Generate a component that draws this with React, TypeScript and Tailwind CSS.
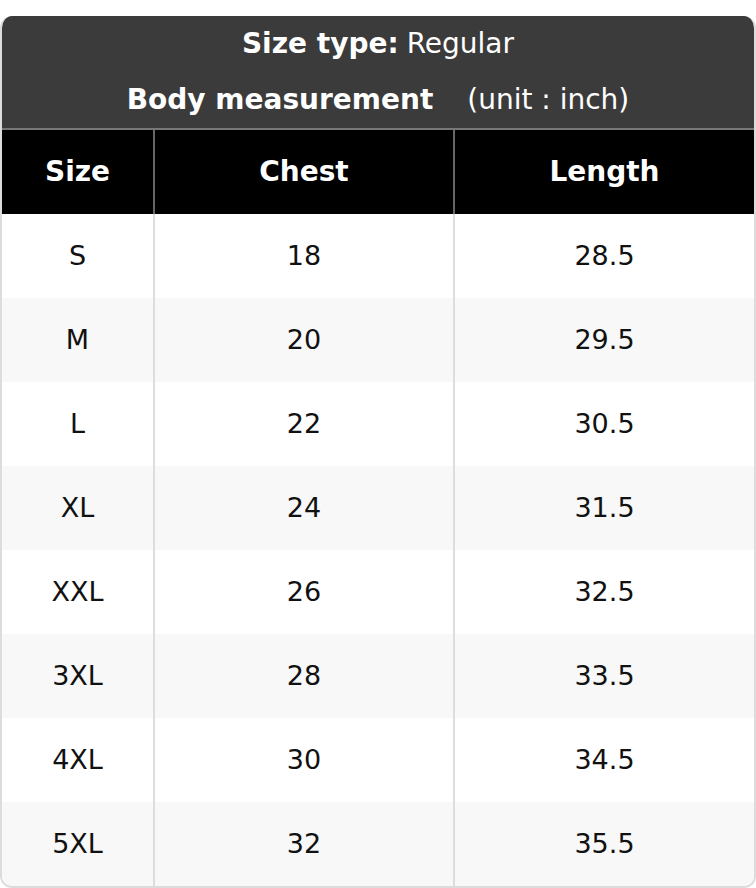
const rows = [
  ["S", "18", "28.5"],
  ["M", "20", "29.5"],
  ["L", "22", "30.5"],
  ["XL", "24", "31.5"],
  ["XXL", "26", "32.5"],
  ["3XL", "28", "33.5"],
  ["4XL", "30", "34.5"],
  ["5XL", "32", "35.5"],
];

const App = () => {
  return (
    <div className="bg-white pt-4" style={{ fontFamily: '"DejaVu Sans", Verdana, sans-serif' }}>
      <div className="w-[756px] overflow-hidden rounded-xl border-2 border-[#dcdcdc] border-t-0">
        <div className="bg-[#3b3b3b] text-[28px] text-white">
          <div className="flex h-14 items-center justify-center">
            <span className="font-bold">Size type:</span>
            <span className="ml-2">Regular</span>
          </div>
          <div className="flex h-14 items-center justify-center">
            <span className="font-bold">Body measurement</span>
            <span className="ml-[34px]">(unit : inch)</span>
          </div>
        </div>
        <div className="grid h-[86px] grid-cols-[153px_300px_1fr] border-t-2 border-[#777] bg-black text-[28px] font-bold text-white">
          <div className="flex items-center justify-center border-r-2 border-[#666]">Size</div>
          <div className="flex items-center justify-center border-r-2 border-[#666]">Chest</div>
          <div className="flex items-center justify-center">Length</div>
        </div>
        {rows.map((r, i) => (
          <div
            key={r[0]}
            className={
              "grid h-[84px] grid-cols-[153px_300px_1fr] text-[27px] text-[#111] " +
              (i % 2 === 1 ? "bg-[#f8f8f8]" : "bg-white")
            }
          >
            <div className="flex items-center justify-center border-r-2 border-[#dddddd]">{r[0]}</div>
            <div className="flex items-center justify-center border-r-2 border-[#dddddd]">{r[1]}</div>
            <div className="flex items-center justify-center">{r[2]}</div>
          </div>
        ))}
      </div>
    </div>
  );
};

export default App;
